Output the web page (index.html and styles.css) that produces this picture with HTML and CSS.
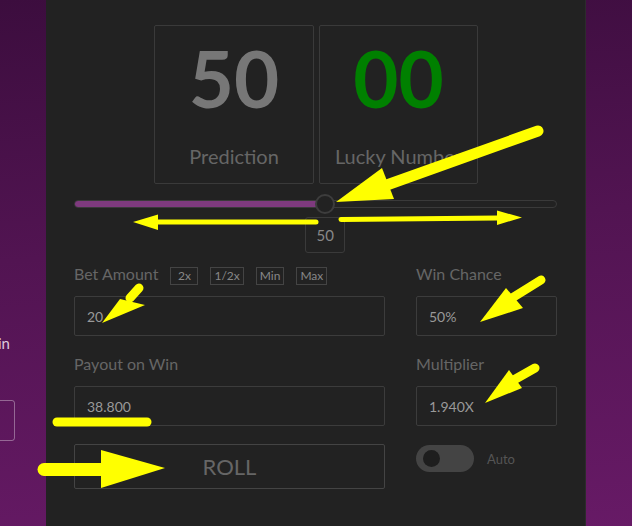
FILE: index.html
```html
<!DOCTYPE html>
<html lang="en">

<head>
  <meta charset="UTF-8">
  <meta name="viewport" content="width=device-width, initial-scale=1.0">
  <title>Dice Roll</title>
  <link rel="stylesheet" href="styles.css">
</head>

<body>
  <div class="page">
    <!-- neighbour panel, mostly off screen -->
    <div class="side">
      <div class="side-inner">
        <p class="side-label">Payout on Win</p>
        <div class="side-box"></div>
      </div>
    </div>

    <div class="panel">
      <div class="results">
        <div class="result">
          <span class="num">50</span>
          <span class="cap">Prediction</span>
        </div>
        <div class="result">
          <span class="num lucky">00</span>
          <span class="cap">Lucky Number</span>
        </div>
      </div>

      <div class="slider">
        <div class="track">
          <div class="fill" style="width: 52%;"></div>
          <span class="thumb" style="left: 52%;"></span>
        </div>
        <div class="bubble-row">
          <span class="bubble" style="margin-left: calc(52% - 20px);">50</span>
        </div>
      </div>

      <div class="form">
        <div class="field">
          <div class="label-row">
            <label>Bet Amount</label>
            <button class="chip">2x</button>
            <button class="chip">1/2x</button>
            <button class="chip">Min</button>
            <button class="chip">Max</button>
          </div>
          <input class="box" type="text" value="20" readonly>
        </div>
        <div class="field">
          <div class="label-row"><label>Win Chance</label></div>
          <input class="box" type="text" value="50%" readonly>
        </div>
        <div class="field">
          <div class="label-row"><label>Payout on Win</label></div>
          <input class="box" type="text" value="38.800" readonly>
        </div>
        <div class="field">
          <div class="label-row"><label>Multiplier</label></div>
          <input class="box" type="text" value="1.940X" readonly>
        </div>
        <button class="roll">ROLL</button>
        <div class="auto">
          <span class="toggle"><i class="knob"></i></span>
          <span class="auto-text">Auto</span>
        </div>
      </div>
    </div>
  </div>

  <!-- yellow annotation marks drawn over the screenshot -->
  <svg class="marks" width="632" height="526" viewBox="0 0 632 526">
    <g fill="#ffff00" stroke="#ffff00" stroke-linecap="round">
      <line x1="538" y1="131" x2="384" y2="186" stroke-width="11" />
      <polygon points="336,202 382,168 394,199" stroke="none" />

      <line x1="316" y1="222" x2="158" y2="222" stroke-width="5" />
      <polygon points="133,222 158,214.5 158,230" stroke="none" />

      <line x1="341" y1="219.5" x2="498" y2="218" stroke-width="5" />
      <polygon points="522,217.5 497,210.5 497,225" stroke="none" />

      <line x1="139" y1="288" x2="130" y2="298" stroke-width="9" />
      <polygon points="102,323 120,299 145,305" stroke="none" />

      <line x1="541" y1="280" x2="512" y2="298" stroke-width="9" />
      <polygon points="480,322 506,288 523,308" stroke="none" />

      <line x1="535" y1="368" x2="512" y2="381" stroke-width="9" />
      <polygon points="485,403 509,370 522,388" stroke="none" />

      <line x1="57" y1="422" x2="147" y2="422" stroke-width="9" />

      <line x1="44" y1="469.5" x2="102" y2="469.5" stroke-width="13" />
      <polygon points="101,450 165,468 101,488" stroke="none" />
    </g>
  </svg>
</body>

</html>
```

FILE: styles.css
```css
* {
  box-sizing: border-box;
}

body {
  margin: 0;
  height: 526px;
  overflow: hidden;
  font-family: Lato, "Open Sans", sans-serif;
  background: linear-gradient(175deg, #3c0d3e 0%, #521452 45%, #671a66 100%);
}

.page {
  display: flex;
  height: 526px;
}

.side {
  width: 46px;
  overflow: hidden;
}

.side-inner {
  width: 215px;
  margin-left: -200px;
  padding-top: 333px;
}

.side-label {
  margin: 0;
  text-align: right;
  padding-right: 5px;
  color: #dccbdc;
  font-size: 15px;
  line-height: 20px;
}

.side-box {
  margin-top: 47px;
  height: 41px;
  border: 1px solid rgba(255, 255, 255, 0.35);
  border-radius: 3px;
}

.panel {
  width: 540px;
  background: #222;
  border-right: 1px solid #2c2c2c;
  padding: 25px 28px 0;
}

.results {
  display: flex;
  justify-content: center;
  gap: 5px;
  padding-left: 1px;
}

.result {
  width: 160px;
  height: 159px;
  border: 1px solid #3a3a3a;
  border-radius: 2px;
  display: flex;
  flex-direction: column;
  align-items: center;
  padding-top: 13px;
}

.result + .result {
  width: 159px;
}

.num {
  font-size: 78px;
  line-height: 1;
  font-weight: bold;
  color: #777;
}

.num.lucky {
  color: #008000;
}

.cap {
  margin-top: 27px;
  font-size: 20px;
  line-height: 24px;
  color: #666;
}

.slider {
  margin-top: 16px;
}

.track {
  position: relative;
  height: 8px;
  border: 1px solid #3a3a3a;
  border-radius: 4px;
}

.fill {
  height: 6px;
  background: #7e3a7e;
  border-radius: 3px;
}

.thumb {
  position: absolute;
  top: 50%;
  width: 20px;
  height: 20px;
  border-radius: 50%;
  background: #222;
  border: 2px solid #3d3d3d;
  transform: translate(-50%, -50%);
}

.bubble-row {
  display: flex;
  margin-top: 9px;
}

.bubble {
  width: 40px;
  height: 36px;
  border: 1px solid #3a3a3a;
  border-radius: 3px;
  display: flex;
  align-items: center;
  justify-content: center;
  color: #888;
  font-size: 15px;
}

.form {
  margin-top: 11px;
  display: grid;
  grid-template-columns: 311px 1fr;
  column-gap: 31px;
  row-gap: 18px;
}

.field {
  display: flex;
  flex-direction: column;
  gap: 12px;
}

.label-row {
  display: flex;
  align-items: center;
  gap: 12px;
  height: 20px;
}

.label-row label {
  color: #666;
  font-size: 16px;
  line-height: 20px;
}

.chip {
  height: 18px;
  min-width: 28px;
  padding: 0 3px;
  margin-top: 3px;
  background: transparent;
  border: 1px solid #444;
  color: #888;
  font-family: inherit;
  font-size: 12px;
  line-height: 16px;
}

.box {
  height: 40px;
  width: 100%;
  background: transparent;
  border: 1px solid #3c3c3c;
  border-radius: 2px;
  padding: 0 12px;
  color: #999;
  font-family: inherit;
  font-size: 14px;
  outline: none;
}

.roll {
  height: 45px;
  background: transparent;
  border: 1px solid #444;
  border-radius: 2px;
  color: #666;
  font-family: inherit;
  font-size: 22px;
}

.auto {
  display: flex;
  align-items: center;
  gap: 13px;
  align-self: start;
  margin-top: 1px;
}

.toggle {
  width: 58px;
  height: 27px;
  border-radius: 14px;
  background: #444;
  display: flex;
  align-items: center;
  padding-left: 7px;
}

.knob {
  width: 17px;
  height: 17px;
  border-radius: 50%;
  background: #1e1e1e;
}

.auto-text {
  color: #555;
  font-size: 13px;
}

.marks {
  position: absolute;
  left: 0;
  top: 0;
  pointer-events: none;
}
```
